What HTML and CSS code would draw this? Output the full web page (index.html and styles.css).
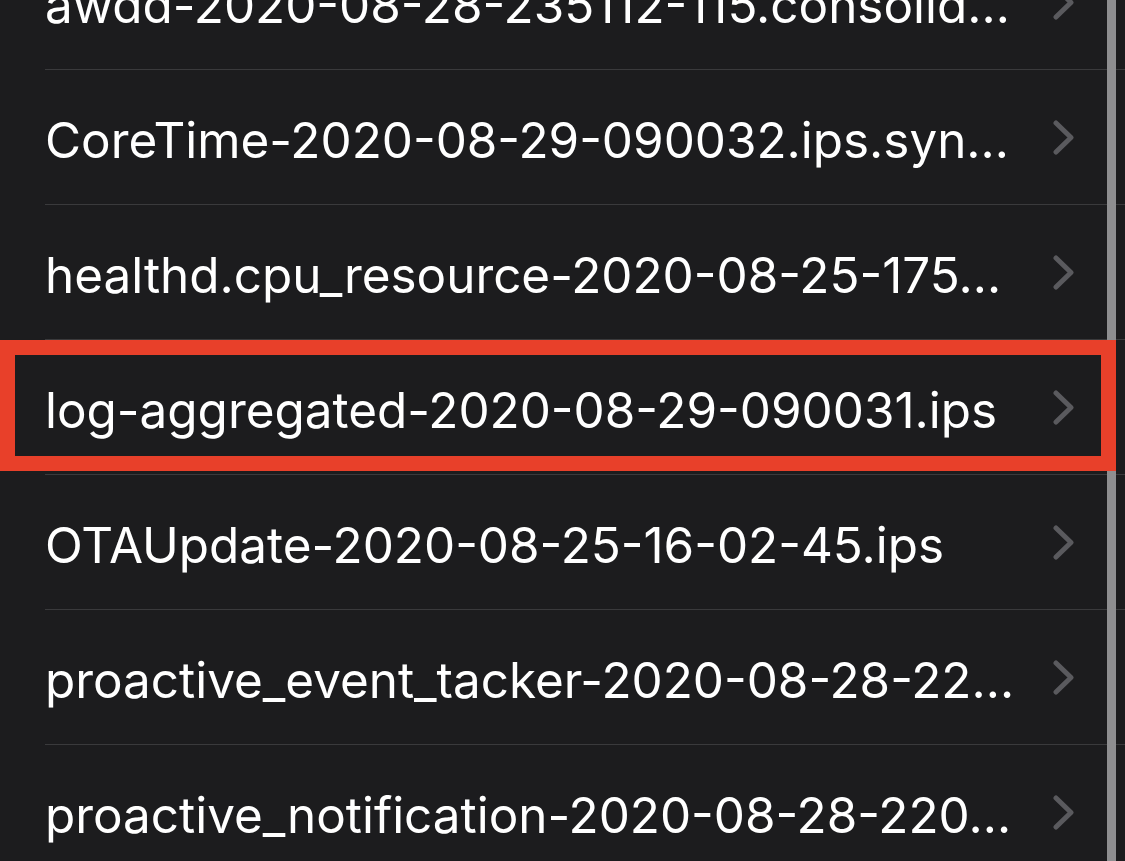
FILE: index.html
```html
<!DOCTYPE html>
<html lang="en">

<head>
    <meta charset="UTF-8">
    <meta name="viewport" content="width=device-width, initial-scale=1.0">
    <title>Logs</title>
    <link rel="stylesheet" href="styles.css">
</head>

<body>

    <div class="list">
        <div class="row">
            <span class="name">awdd-2020-08-28-235112-115.consolid…</span>
            <svg class="chevron" viewBox="0 0 21 35"><path d="M3 3 L18 17.5 L3 32"/></svg>
        </div>
        <div class="row">
            <span class="name">CoreTime-2020-08-29-090032.ips.syn…</span>
            <svg class="chevron" viewBox="0 0 21 35"><path d="M3 3 L18 17.5 L3 32"/></svg>
        </div>
        <div class="row">
            <span class="name">healthd.cpu_resource-2020-08-25-175…</span>
            <svg class="chevron" viewBox="0 0 21 35"><path d="M3 3 L18 17.5 L3 32"/></svg>
        </div>
        <div class="row">
            <span class="name">log-aggregated-2020-08-29-090031.ips</span>
            <svg class="chevron" viewBox="0 0 21 35"><path d="M3 3 L18 17.5 L3 32"/></svg>
        </div>
        <div class="row">
            <span class="name">OTAUpdate-2020-08-25-16-02-45.ips</span>
            <svg class="chevron" viewBox="0 0 21 35"><path d="M3 3 L18 17.5 L3 32"/></svg>
        </div>
        <div class="row">
            <span class="name">proactive_event_tacker-2020-08-28-22…</span>
            <svg class="chevron" viewBox="0 0 21 35"><path d="M3 3 L18 17.5 L3 32"/></svg>
        </div>
        <div class="row">
            <span class="name">proactive_notification-2020-08-28-220…</span>
            <svg class="chevron" viewBox="0 0 21 35"><path d="M3 3 L18 17.5 L3 32"/></svg>
        </div>
    </div>

    <div class="scrollbar"></div>
    <div class="highlight"></div>

</body>

</html>
```

FILE: styles.css
```css
body {
    margin: 0;
    height: 861px;
    overflow: hidden;
    background-color: #1c1c1e;
    font-family: Inter, "Noto Sans", sans-serif;
    color: #ffffff;
    position: relative;
}

.list {
    margin-top: -65px;
}

.row {
    display: flex;
    align-items: center;
    justify-content: space-between;
    height: 134px;
    margin-left: 45px;
    padding-right: 51px;
    border-bottom: 1px solid #3a3a3c;
}

.name {
    font-size: 49.4px;
    padding-top: 6px;
    white-space: nowrap;
    overflow: hidden;
}

.chevron {
    width: 21px;
    height: 35px;
    flex-shrink: 0;
    fill: none;
    stroke: #5a5a5e;
    stroke-width: 5;
    stroke-linecap: round;
    stroke-linejoin: round;
}

.scrollbar {
    position: absolute;
    top: 0;
    left: 1107px;
    width: 9px;
    height: 861px;
    background-color: #8e8e90;
}

.highlight {
    position: absolute;
    top: 340px;
    left: 0;
    width: 1086px;
    height: 101px;
    border: 15px solid #e8402a;
}
```
